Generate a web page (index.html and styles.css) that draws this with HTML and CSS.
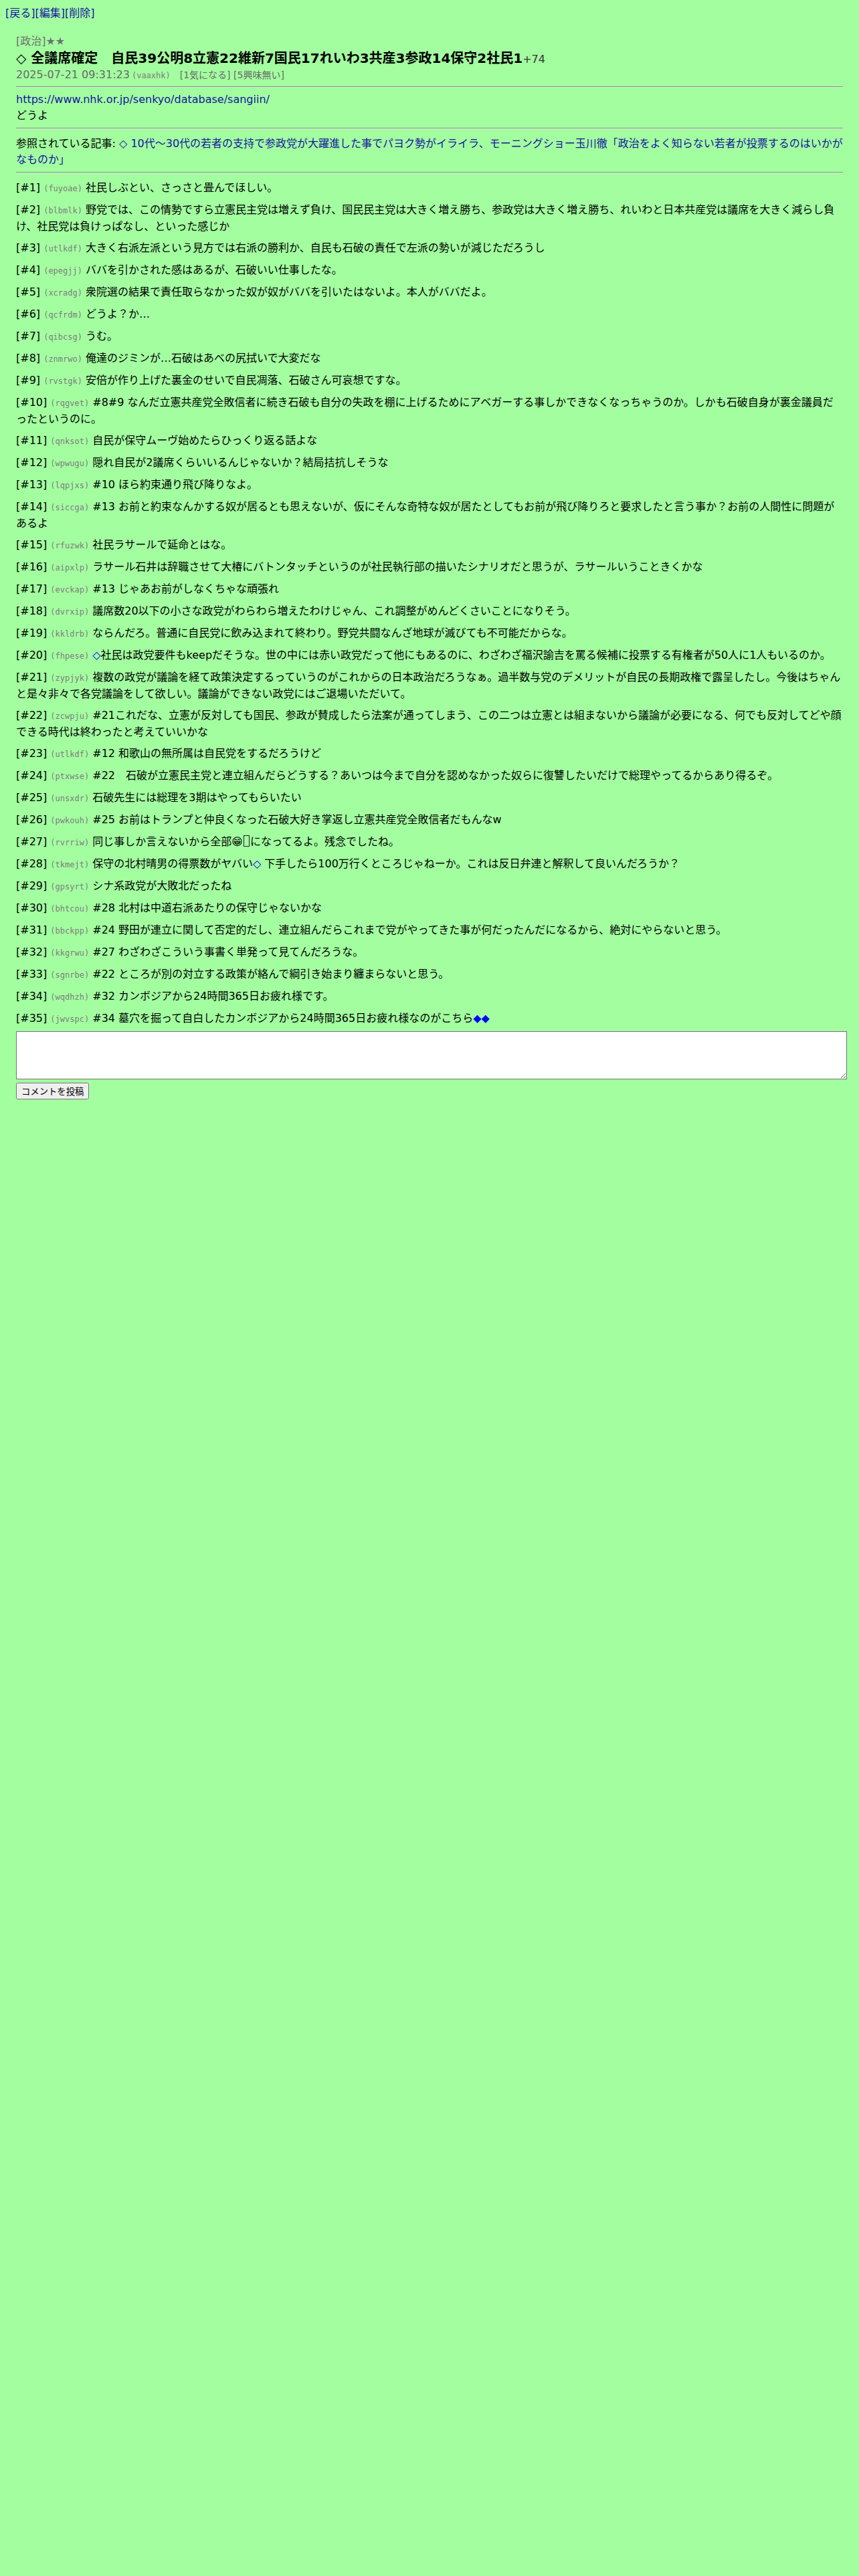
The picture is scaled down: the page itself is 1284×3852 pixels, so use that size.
FILE: index.html
```html
<!DOCTYPE html>
<html lang="ja">
  <head>
    <meta charset="UTF-8" />
    <meta name="viewport" content="width=device-width, initial-scale=1.0" />
    <title>全議席確定</title>
    <link rel="stylesheet" href="styles.css">
  </head>
  <body>
    <div class="nav"><a href="#">[戻る]</a><a href="#">[編集]</a><a href="#">[削除]</a></div>

    <div class="post">
      <div class="cat">[政治]★★</div>
      <h1 class="title">◇ 全議席確定　自民39公明8立憲22維新7国民17れいわ3共産3参政14保守2社民1<span class="count">+74</span></h1>
      <div class="meta">2025-07-21 09:31:23<span class="uid">(vaaxhk)</span><span class="votes">[1気になる] [5興味無い]</span></div>
      <hr>
      <div class="body">
        <a href="#">https://www.nhk.or.jp/senkyo/database/sangiin/</a><br>
        どうよ
      </div>
      <hr>
      <div class="refs">参照されている記事: <a href="#">◇ 10代～30代の若者の支持で参政党が大躍進した事でパヨク勢がイライラ、モーニングショー玉川徹「政治をよく知らない若者が投票するのはいかがなものか」</a></div>
      <hr>

      <div class="comments">
        <div class="comment"><span class="no">[#1]</span> <span class="uid">(fuyoae)</span> 社民しぶとい、さっさと畳んでほしい。</div>
        <div class="comment"><span class="no">[#2]</span> <span class="uid">(blbmlk)</span> 野党では、この情勢ですら立憲民主党は増えず負け、国民民主党は大きく増え勝ち、参政党は大きく増え勝ち、れいわと日本共産党は議席を大きく減らし負け、社民党は負けっぱなし、といった感じか</div>
        <div class="comment"><span class="no">[#3]</span> <span class="uid">(utlkdf)</span> 大きく右派左派という見方では右派の勝利か、自民も石破の責任で左派の勢いが減じただろうし</div>
        <div class="comment"><span class="no">[#4]</span> <span class="uid">(epegjj)</span> ババを引かされた感はあるが、石破いい仕事したな。</div>
        <div class="comment"><span class="no">[#5]</span> <span class="uid">(xcradg)</span> 衆院選の結果で責任取らなかった奴が奴がババを引いたはないよ。本人がババだよ。</div>
        <div class="comment"><span class="no">[#6]</span> <span class="uid">(qcfrdm)</span> どうよ？か…</div>
        <div class="comment"><span class="no">[#7]</span> <span class="uid">(qibcsg)</span> うむ。</div>
        <div class="comment"><span class="no">[#8]</span> <span class="uid">(znmrwo)</span> 俺達のジミンが…石破はあべの尻拭いで大変だな</div>
        <div class="comment"><span class="no">[#9]</span> <span class="uid">(rvstgk)</span> 安倍が作り上げた裏金のせいで自民凋落、石破さん可哀想ですな。</div>
        <div class="comment"><span class="no">[#10]</span> <span class="uid">(rqgvet)</span> #8#9 なんだ立憲共産党全敗信者に続き石破も自分の失政を棚に上げるためにアベガーする事しかできなくなっちゃうのか。しかも石破自身が裏金議員だったというのに。</div>
        <div class="comment"><span class="no">[#11]</span> <span class="uid">(qnksot)</span> 自民が保守ムーヴ始めたらひっくり返る話よな</div>
        <div class="comment"><span class="no">[#12]</span> <span class="uid">(wpwugu)</span> 隠れ自民が2議席くらいいるんじゃないか？結局拮抗しそうな</div>
        <div class="comment"><span class="no">[#13]</span> <span class="uid">(lqpjxs)</span> #10 ほら約束通り飛び降りなよ。</div>
        <div class="comment"><span class="no">[#14]</span> <span class="uid">(siccga)</span> #13 お前と約束なんかする奴が居るとも思えないが、仮にそんな奇特な奴が居たとしてもお前が飛び降りろと要求したと言う事か？お前の人間性に問題があるよ</div>
        <div class="comment"><span class="no">[#15]</span> <span class="uid">(rfuzwk)</span> 社民ラサールで延命とはな。</div>
        <div class="comment"><span class="no">[#16]</span> <span class="uid">(aipxlp)</span> ラサール石井は辞職させて大椿にバトンタッチというのが社民執行部の描いたシナリオだと思うが、ラサールいうこときくかな</div>
        <div class="comment"><span class="no">[#17]</span> <span class="uid">(evckap)</span> #13 じゃあお前がしなくちゃな頑張れ</div>
        <div class="comment"><span class="no">[#18]</span> <span class="uid">(dvrxip)</span> 議席数20以下の小さな政党がわらわら増えたわけじゃん、これ調整がめんどくさいことになりそう。</div>
        <div class="comment"><span class="no">[#19]</span> <span class="uid">(kkldrb)</span> ならんだろ。普通に自民党に飲み込まれて終わり。野党共闘なんざ地球が滅びても不可能だからな。</div>
        <div class="comment"><span class="no">[#20]</span> <span class="uid">(fhpese)</span> <a class="mark" href="#">◇</a>社民は政党要件もkeepだそうな。世の中には赤い政党だって他にもあるのに、わざわざ福沢諭吉を罵る候補に投票する有権者が50人に1人もいるのか。</div>
        <div class="comment"><span class="no">[#21]</span> <span class="uid">(zypjyk)</span> 複数の政党が議論を経て政策決定するっていうのがこれからの日本政治だろうなぁ。過半数与党のデメリットが自民の長期政権で露呈したし。今後はちゃんと是々非々で各党議論をして欲しい。議論ができない政党にはご退場いただいて。</div>
        <div class="comment"><span class="no">[#22]</span> <span class="uid">(zcwpju)</span> #21これだな、立憲が反対しても国民、参政が賛成したら法案が通ってしまう、この二つは立憲とは組まないから議論が必要になる、何でも反対してどや顔できる時代は終わったと考えていいかな</div>
        <div class="comment"><span class="no">[#23]</span> <span class="uid">(utlkdf)</span> #12 和歌山の無所属は自民党をするだろうけど</div>
        <div class="comment"><span class="no">[#24]</span> <span class="uid">(ptxwse)</span> #22　石破が立憲民主党と連立組んだらどうする？あいつは今まで自分を認めなかった奴らに復讐したいだけで総理やってるからあり得るぞ。</div>
        <div class="comment"><span class="no">[#25]</span> <span class="uid">(unsxdr)</span> 石破先生には総理を3期はやってもらいたい</div>
        <div class="comment"><span class="no">[#26]</span> <span class="uid">(pwkouh)</span> #25 お前はトランプと仲良くなった石破大好き掌返し立憲共産党全敗信者だもんなw</div>
        <div class="comment"><span class="no">[#27]</span> <span class="uid">(rvrriw)</span> 同じ事しか言えないから全部😁<span class="tofu"></span>になってるよ。残念でしたね。</div>
        <div class="comment"><span class="no">[#28]</span> <span class="uid">(tkmejt)</span> 保守の北村晴男の得票数がヤバい<a class="mark" href="#">◇</a> 下手したら100万行くところじゃねーか。これは反日弁連と解釈して良いんだろうか？</div>
        <div class="comment"><span class="no">[#29]</span> <span class="uid">(gpsyrt)</span> シナ系政党が大敗北だったね</div>
        <div class="comment"><span class="no">[#30]</span> <span class="uid">(bhtcou)</span> #28 北村は中道右派あたりの保守じゃないかな</div>
        <div class="comment"><span class="no">[#31]</span> <span class="uid">(bbckpp)</span> #24 野田が連立に関して否定的だし、連立組んだらこれまで党がやってきた事が何だったんだになるから、絶対にやらないと思う。</div>
        <div class="comment"><span class="no">[#32]</span> <span class="uid">(kkgrwu)</span> #27 わざわざこういう事書く単発って見てんだろうな。</div>
        <div class="comment"><span class="no">[#33]</span> <span class="uid">(sgnrbe)</span> #22 ところが別の対立する政策が絡んで綱引き始まり纏まらないと思う。</div>
        <div class="comment"><span class="no">[#34]</span> <span class="uid">(wqdhzh)</span> #32 カンボジアから24時間365日お疲れ様です。</div>
        <div class="comment"><span class="no">[#35]</span> <span class="uid">(jwvspc)</span> #34 墓穴を掘って自白したカンボジアから24時間365日お疲れ様なのがこちら<a class="mark" href="#">◆◆</a></div>
      </div>

      <form class="reply">
        <textarea class="reply_text"></textarea>
        <button type="button" class="reply_btn">コメントを投稿</button>
      </form>
    </div>
  </body>
</html>
```

FILE: styles.css
```css
body {
  margin: 8px;
  background-color: #a3fea0;
  color: #000;
  font-family: "DejaVu Sans", "Noto Sans CJK JP", sans-serif;
  font-size: 16px;
  line-height: 24px;
}

a {
  color: #1414a0;
  text-decoration: none;
}

.nav {
  line-height: 24px;
}

.post {
  margin: 18px 16px 0;
}

.cat {
  color: #6f6f6f;
}

.title {
  margin: 0;
  font-size: 20px;
  line-height: 26px;
  font-weight: bold;
}

.count {
  font-size: 16px;
  font-weight: normal;
  color: #333;
}

.meta {
  color: #6a6a6a;
  line-height: 20px;
}

.meta .uid {
  margin-left: 3px;
}

.votes {
  margin-left: 14px;
  font-size: 14px;
}

.uid {
  font-family: "DejaVu Sans Mono", monospace;
  font-size: 12px;
  color: #7d7d7d;
}

hr {
  margin: 6px 0;
  border: none;
  border-top: 1px solid #8f8f8f;
  border-bottom: 1px solid #c4f5c2;
}

.refs {
  padding-top: 4px;
}

.comments {
  padding-top: 4px;
  display: flex;
  flex-direction: column;
  gap: 8px;
}

.mark {
  color: #0000ff;
}

.tofu {
  display: inline-block;
  width: 7px;
  height: 15px;
  border: 1px solid #222;
  vertical-align: -2px;
  margin: 0 1px;
}

.reply {
  margin: 6px 0 0;
}

.reply_text {
  display: block;
  width: 100%;
  height: 66px;
  padding: 2px;
  border: 1px solid #767676;
  background: #fff;
  margin: 0;
}

.reply_btn {
  margin-top: 5px;
  font-family: "DejaVu Sans", "Noto Sans CJK JP", sans-serif;
  font-size: 13.33px;
}
```
